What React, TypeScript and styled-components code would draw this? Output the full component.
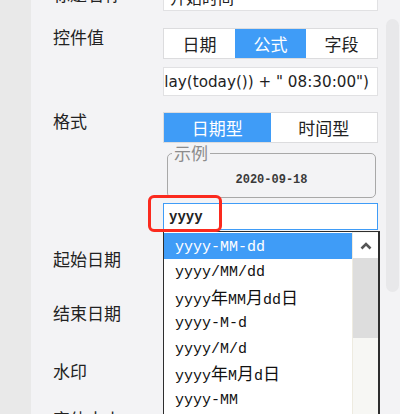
import React from 'react';
import styled, { createGlobalStyle } from 'styled-components';

const BLUE = '#3f9cf7';

const GlobalStyle = createGlobalStyle`
  html, body {
    margin: 0;
    padding: 0;
  }
  body {
    width: 400px;
    height: 414px;
    overflow: hidden;
    background: #f3f3f5;
    font-family: "Noto Sans CJK SC", "Noto Sans", sans-serif;
  }
`;

const Screen = styled.div`
  display: flex;
  width: 400px;
  height: 414px;
  overflow: hidden;
`;

const SideStrip = styled.div`
  width: 31px;
  flex-shrink: 0;
  background: #e9e9e9;
`;

const Panel = styled.div`
  position: relative;
  flex: 1;
  background: #f3f3f5;
  padding-left: 22px;
`;

const PanelScrollThumb = styled.div`
  position: absolute;
  right: 1px;
  top: 19px;
  width: 13px;
  height: 273px;
  border-radius: 7px;
  background: #e8e8ea;
`;

const Form = styled.div`
  margin-top: -18px;
  display: flex;
  flex-direction: column;
  width: 325px;
`;

const Row = styled.div<{ $gap?: number; $h?: number }>`
  display: flex;
  align-items: ${(p) => (p.$h ? 'center' : 'flex-start')};
  margin-top: ${(p) => p.$gap ?? 0}px;
  height: ${(p) => (p.$h ? `${p.$h}px` : 'auto')};
`;

const Label = styled.div`
  width: 110px;
  flex-shrink: 0;
  font-size: 17px;
  line-height: 18px;
  color: #222;
  white-space: nowrap;
`;

const Control = styled.div`
  width: 215px;
  display: flex;
  flex-direction: column;
`;

const TextBox = styled.div<{ $align?: 'left' | 'right' }>`
  box-sizing: border-box;
  height: 29px;
  background: #fff;
  border: 1px solid #e1e1e3;
  display: flex;
  align-items: center;
  justify-content: ${(p) => (p.$align === 'right' ? 'flex-end' : 'flex-start')};
  overflow: hidden;
  padding: 0 8px 0 6px;
  font-size: 16px;
  color: #222;
  white-space: nowrap;
`;

const FormulaText = styled.span`
  font-family: "DejaVu Sans", Verdana, sans-serif;
  font-size: 15.2px;
  color: #1e1e1e;
  flex-shrink: 0;
`;

const Segmented = styled.div<{ $gap?: number }>`
  box-sizing: border-box;
  display: flex;
  height: 31px;
  border: 1px solid #dcdcde;
  background: #fff;
  margin-bottom: ${(p) => p.$gap ?? 0}px;
`;

const Segment = styled.div<{ $active?: boolean }>`
  flex: 1;
  display: flex;
  align-items: center;
  justify-content: center;
  font-size: 17px;
  color: ${(p) => (p.$active ? '#fff' : '#222')};
  background: ${(p) => (p.$active ? BLUE : '#fff')};
`;

const Sample = styled.fieldset`
  box-sizing: border-box;
  margin: 0 2px 0 4px;
  padding: 0;
  min-inline-size: 0;
  border: 1px solid #a8a8a8;
  border-radius: 5px;
`;

const SampleLegend = styled.legend`
  margin-left: 4px;
  padding: 0 2px;
  font-size: 17px;
  line-height: 20px;
  color: #8c8c8c;
`;

const SampleValue = styled.div`
  height: 34px;
  line-height: 34px;
  text-align: center;
  font-family: "Liberation Mono", "Courier New", monospace;
  font-size: 12px;
  font-weight: 700;
  color: #3a3a3a;
`;

const PatternWrap = styled.div`
  position: relative;
  margin-top: 5px;
`;

const PatternInput = styled.div`
  box-sizing: border-box;
  height: 27px;
  background: #fff;
  border: 1px solid ${BLUE};
  padding-left: 5px;
  display: flex;
  align-items: center;
  font-family: "Liberation Mono", "Courier New", monospace;
  font-size: 14px;
  font-weight: 700;
  color: #222;
`;

const Highlight = styled.div`
  position: absolute;
  left: -15px;
  top: -8px;
  width: 74px;
  height: 37px;
  box-sizing: border-box;
  border: 3px solid #fb2a1e;
  border-radius: 6px;
  z-index: 6;
`;

const Dropdown = styled.div`
  position: absolute;
  left: 0;
  top: calc(100% + 1px);
  width: 217px;
  height: 200px;
  box-sizing: border-box;
  border: 1px solid #2e2e2e;
  border-right-width: 2px;
  border-bottom: none;
  background: #fff;
  display: flex;
  z-index: 5;
`;

const OptionList = styled.div`
  flex: 1;
  padding-top: 1px;
`;

const Option = styled.div<{ $selected?: boolean }>`
  box-sizing: border-box;
  height: 25.5px;
  display: flex;
  align-items: center;
  overflow: hidden;
  padding: 4px 0 0 11px;
  font-family: "Liberation Mono", "Courier New", monospace;
  font-size: 15px;
  line-height: 18px;
  color: ${(p) => (p.$selected ? '#fff' : '#111')};
  background: ${(p) => (p.$selected ? BLUE : 'transparent')};
  white-space: nowrap;
`;

const Cjk = styled.span`
  font-family: "Noto Sans CJK SC", sans-serif;
  font-size: 17px;
  line-height: 18px;
`;

const ListScroll = styled.div`
  width: 25px;
  flex-shrink: 0;
  display: flex;
  flex-direction: column;
  padding-top: 1px;
  background: #f7f7f4;
  border-left: 1px solid #eeebe0;
`;

const ScrollUp = styled.div`
  height: 25px;
  background: #fff;
  display: flex;
  align-items: center;
  justify-content: center;
`;

const ScrollThumb = styled.div`
  height: 80px;
  background: #dddddd;
`;

const options = [
  'yyyy-MM-dd',
  'yyyy/MM/dd',
  'yyyy年MM月dd日',
  'yyyy-M-d',
  'yyyy/M/d',
  'yyyy年M月d日',
  'yyyy-MM',
  'yyyy/MM',
];

// CJK characters in the list are wider than the half-width Latin ones
const renderOption = (text: string) => (
  <span>
    {text.split(/([\u4e00-\u9fff])/).map((part, i) =>
      /[\u4e00-\u9fff]/.test(part) ? <Cjk key={i}>{part}</Cjk> : part
    )}
  </span>
);

const App: React.FC = () => (
  <>
    <GlobalStyle />
    <Screen>
      <SideStrip />
      <Panel>
        <PanelScrollThumb />
        <Form>
          <Row>
            <Label style={{ lineHeight: '24px' }}>标题名称</Label>
            <Control>
              <TextBox>开始时间</TextBox>
            </Control>
          </Row>

          <Row $gap={17}>
            <Label>控件值</Label>
            <Control>
              <Segmented $gap={8}>
                <Segment>日期</Segment>
                <Segment $active>公式</Segment>
                <Segment>字段</Segment>
              </Segmented>
              <TextBox $align="right">
                <FormulaText>
                  =concat(toDisplay(today()) + " 08:30:00")
                </FormulaText>
              </TextBox>
            </Control>
          </Row>

          <Row $gap={16}>
            <Label>格式</Label>
            <Control>
              <Segmented>
                <Segment $active>日期型</Segment>
                <Segment>时间型</Segment>
              </Segmented>
              <Sample>
                <SampleLegend>示例</SampleLegend>
                <SampleValue>2020-09-18</SampleValue>
              </Sample>
              <PatternWrap>
                <PatternInput>yyyy</PatternInput>
                <Highlight />
                <Dropdown>
                  <OptionList>
                    {options.map((o, i) => (
                      <Option key={o} $selected={i === 0}>
                        {renderOption(o)}
                      </Option>
                    ))}
                  </OptionList>
                  <ListScroll>
                    <ScrollUp>
                      <svg width="12" height="8" viewBox="0 0 12 8">
                        <polyline
                          points="1.5,6.5 6,2 10.5,6.5"
                          fill="none"
                          stroke="#555"
                          strokeWidth="2.6"
                        />
                      </svg>
                    </ScrollUp>
                    <ScrollThumb />
                  </ListScroll>
                </Dropdown>
              </PatternWrap>
            </Control>
          </Row>

          <Row $h={58}>
            <Label>起始日期</Label>
            <Control>
              <TextBox />
            </Control>
          </Row>
          <Row $h={50}>
            <Label>结束日期</Label>
            <Control>
              <TextBox />
            </Control>
          </Row>
          <Row $h={66}>
            <Label>水印</Label>
            <Control>
              <TextBox />
            </Control>
          </Row>
          <Row $h={30}>
            <Label>字体大小</Label>
            <Control>
              <TextBox />
            </Control>
          </Row>
        </Form>
      </Panel>
    </Screen>
  </>
);

export default App;
